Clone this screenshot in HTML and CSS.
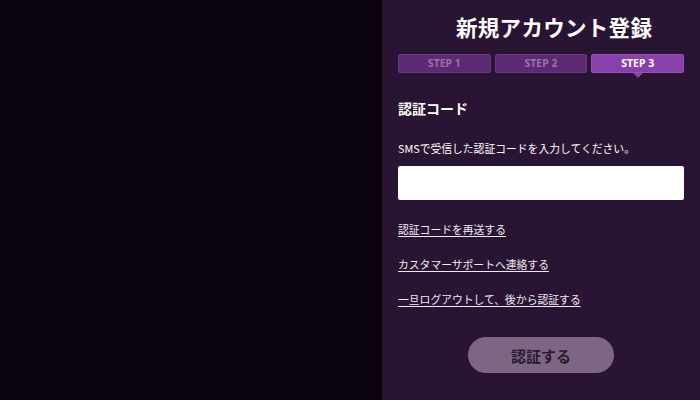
FILE: index.html
```html
<!DOCTYPE html>
<html lang="ja">
<head>
<meta charset="utf-8">
<link rel="stylesheet" href="styles.css">
</head>
<body>
<div class="page">
  <div class="backdrop"></div>
  <div class="panel">
    <h1 class="title">新規アカウント登録</h1>
    <div class="steps">
      <div class="step">STEP 1</div>
      <div class="step">STEP 2</div>
      <div class="step active">STEP 3</div>
    </div>
    <h2 class="heading">認証コード</h2>
    <p class="desc">SMSで受信した認証コードを入力してください。</p>
    <input class="code" type="text">
    <div class="links">
      <a class="link" href="#">認証コードを再送する</a>
      <a class="link" href="#">カスタマーサポートへ連絡する</a>
      <a class="link" href="#">一旦ログアウトして、後から認証する</a>
    </div>
    <div class="actions">
      <button class="submit">認証する</button>
    </div>
  </div>
</div>
</body>
</html>
```

FILE: styles.css
```css
* { box-sizing: border-box; }
html, body { margin: 0; padding: 0; }
body {
  width: 700px;
  height: 400px;
  overflow: hidden;
  font-family: "Noto Sans CJK JP", "Noto Sans", sans-serif;
  background: #0b020f;
}
.page {
  display: flex;
  height: 400px;
}
.backdrop {
  width: 382px;
  background: #0b020f;
}
.panel {
  flex: 1;
  background: #2a1433;
  padding: 0 16px;
  display: flex;
  flex-direction: column;
}
.title {
  margin: 12px 0 0 0;
  padding-left: 58px;
  font-size: 21.5px;
  font-weight: 700;
  line-height: 30px;
  color: #ffffff;
  letter-spacing: 0.3px;
}
.steps {
  display: flex;
  gap: 4px;
  margin-top: 12px;
}
.step {
  flex: 1;
  height: 19px;
  background: #5b2a72;
  border: 1px solid #6a3783;
  border-radius: 2px;
  color: #9a72ab;
  font-family: "Noto Sans", sans-serif;
  font-weight: 700;
  font-size: 10.5px;
  line-height: 17px;
  text-align: center;
  position: relative;
}
.step.active {
  background: #8840ad;
  border-color: #9650b8;
  color: #ffffff;
}
.step.active::after {
  content: "";
  position: absolute;
  left: 50%;
  bottom: -6px;
  margin-left: -5px;
  border-left: 5px solid transparent;
  border-right: 5px solid transparent;
  border-top: 5px solid #8840ad;
}
.heading {
  margin: 25px 0 0 0;
  font-size: 14px;
  font-weight: 700;
  line-height: 20px;
  color: #ffffff;
}
.desc {
  margin: 22px 0 0 0;
  font-size: 10.8px;
  line-height: 16px;
  color: #ffffff;
}
.code {
  margin-top: 10px;
  height: 34px;
  width: 100%;
  border: none;
  border-radius: 2px;
  background: #ffffff;
}
.links {
  display: flex;
  flex-direction: column;
  align-items: flex-start;
  gap: 19px;
  margin-top: 21px;
}
.link {
  font-size: 10.8px;
  line-height: 16px;
  color: #f0eaf2;
  text-decoration: underline;
  text-underline-offset: 2px;
}
.actions {
  display: flex;
  justify-content: center;
  margin-top: 30px;
}
.submit {
  width: 146px;
  height: 36px;
  border: none;
  border-radius: 18px;
  background: #7d6683;
  color: #2a1a2e;
  font-family: "Noto Sans CJK JP", sans-serif;
  font-size: 15px;
  font-weight: 700;
}
```
